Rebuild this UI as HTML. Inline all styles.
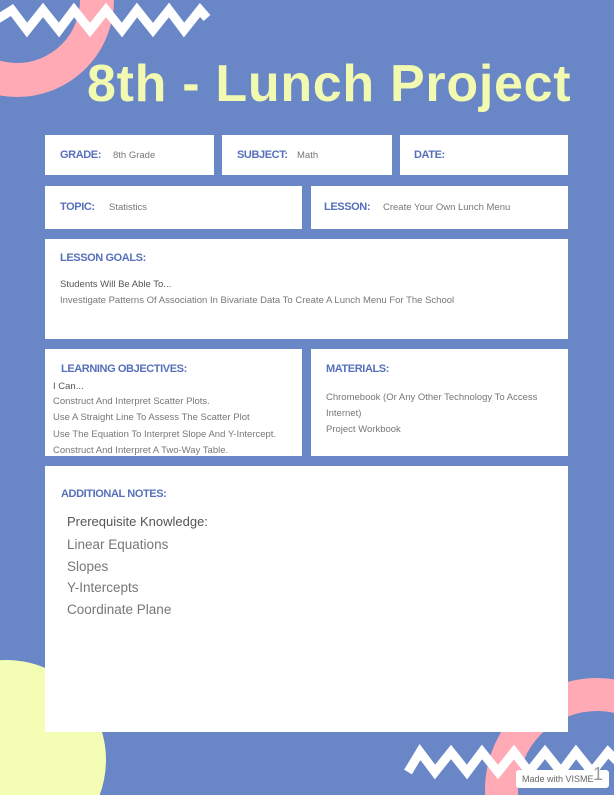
<!DOCTYPE html>
<html style="overflow:hidden"><head><meta charset="utf-8"><style>
*{margin:0;padding:0;box-sizing:border-box}
html,body{width:614px;height:795px;overflow:hidden}
body{background:#6986c6;position:relative;font-family:"Liberation Sans",sans-serif}
.b{position:absolute;background:#fff}
.t{position:absolute;white-space:nowrap}
.h{color:#5670bb;font-size:11px;letter-spacing:-0.4px;font-weight:bold}
.v{color:#777;font-size:9.5px}
.s{color:#777;font-size:9.5px}
.d{color:#555;font-size:9.5px}
</style></head><body>
<svg width="614" height="795" style="position:absolute;left:0;top:0;display:block">
<circle cx="17" cy="0" r="80" fill="none" stroke="#ffaab4" stroke-width="34"/>
<polyline points="-4,20 12,10 27,30 43,10 59,30 74,10 90,30 106,10 122,30 137,10 153,30 169,10 184,30 200,10 207,18" fill="none" stroke="#fff" stroke-width="9"/>
<circle cx="6" cy="760" r="100" fill="#f3fdb3"/>
<circle cx="597" cy="790" r="95.5" fill="none" stroke="#ffaab4" stroke-width="33"/>
<polyline points="408,772 420,752 435,772 451,752 467,772 482,752 498,772 514,752 529,772 545,752 561,772 576,752 592,772 608,752 620,764" fill="none" stroke="#fff" stroke-width="9"/>
</svg>
<div class="t" style="left:87px;top:54px;font-size:52px;font-weight:bold;color:#f2f9b0;letter-spacing:0.7px">8th - Lunch Project</div>

<div class="b" style="left:45px;top:135px;width:169px;height:40px"></div>
<div class="b" style="left:222px;top:135px;width:170px;height:40px"></div>
<div class="b" style="left:400px;top:135px;width:168px;height:40px"></div>
<div class="t h" style="left:60px;top:149px">GRADE:</div><div class="t v" style="left:113px;top:150px">8th Grade</div>
<div class="t h" style="left:237px;top:149px">SUBJECT:</div><div class="t v" style="left:297px;top:150px">Math</div>
<div class="t h" style="left:414px;top:149px">DATE:</div>

<div class="b" style="left:45px;top:186px;width:257px;height:43px"></div>
<div class="b" style="left:311px;top:186px;width:257px;height:43px"></div>
<div class="t h" style="left:60px;top:201px">TOPIC:</div><div class="t v" style="left:109px;top:202px">Statistics</div>
<div class="t h" style="left:324px;top:201px">LESSON:</div><div class="t v" style="left:383px;top:202px">Create Your Own Lunch Menu</div>

<div class="b" style="left:45px;top:239px;width:523px;height:100px"></div>
<div class="t h" style="left:60px;top:252px">LESSON GOALS:</div>
<div class="t d" style="left:60px;top:279px">Students Will Be Able To...</div>
<div class="t s" style="left:60px;top:295px">Investigate Patterns Of Association In Bivariate Data To Create A Lunch Menu For The School</div>

<div class="b" style="left:45px;top:349px;width:257px;height:107px;overflow:hidden">
<div class="t d" style="left:8px;top:32px">I Can...</div>
<div class="t s" style="left:8px;top:45px;line-height:16.3px">Construct And Interpret Scatter Plots.<br>Use A Straight Line To Assess The Scatter Plot<br>Use The Equation To Interpret Slope And Y-Intercept.<br>Construct And Interpret A Two-Way Table.</div>
</div>
<div class="b" style="left:311px;top:349px;width:257px;height:107px"></div>
<div class="t h" style="left:61px;top:363px">LEARNING OBJECTIVES:</div>
<div class="t h" style="left:326px;top:363px">MATERIALS:</div>
<div class="t s" style="left:326px;top:390px;line-height:16px">Chromebook (Or Any Other Technology To Access<br>Internet)<br>Project Workbook</div>

<div class="b" style="left:45px;top:466px;width:523px;height:266px"></div>
<div class="t h" style="left:61px;top:488px">ADDITIONAL NOTES:</div>
<div class="t" style="left:67px;top:514px;font-size:13px;color:#555">Prerequisite Knowledge:</div>
<div class="t" style="left:67px;top:534px;font-size:13.5px;color:#777;line-height:21.7px">Linear Equations<br>Slopes<br>Y-Intercepts<br>Coordinate Plane</div>

<div class="b" style="left:516px;top:770px;width:93px;height:18px;border-radius:3px"></div>
<div class="t" style="left:522px;top:774px;font-size:9px;line-height:10px;color:#666">Made with VISME</div>
<div class="t" style="left:593px;top:764px;font-size:18px;line-height:20px;color:#999">1</div>
</body></html>
